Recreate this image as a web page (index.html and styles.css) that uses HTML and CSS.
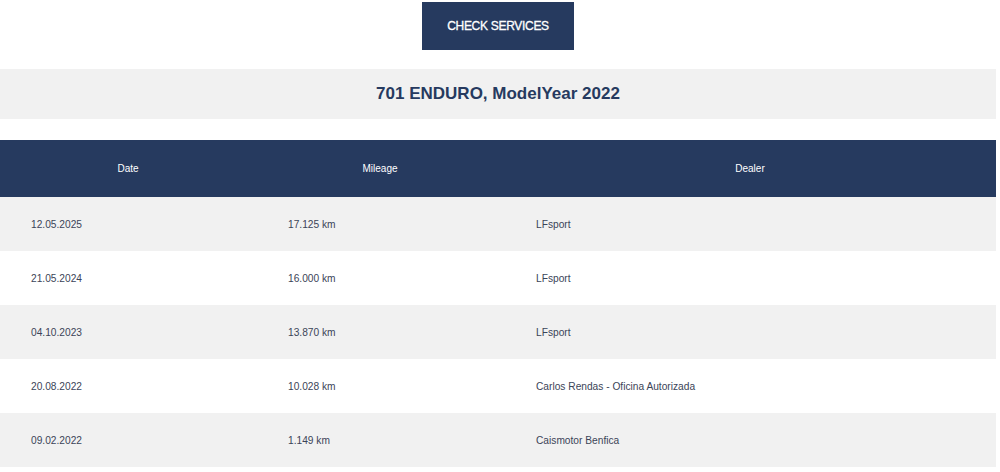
FILE: index.html
```html
<!DOCTYPE html>
<html>
<head>
<meta charset="utf-8">
<link rel="stylesheet" href="styles.css">
</head>
<body>
<div class="page">
  <div class="btn-wrap"><button class="btn">CHECK SERVICES</button></div>
  <div class="title-band"><h1 class="title">701 ENDURO, ModelYear 2022</h1></div>
  <table class="services">
    <thead>
      <tr><th class="c-date">Date</th><th class="c-mil">Mileage</th><th class="c-dealer">Dealer</th></tr>
    </thead>
    <tbody>
      <tr><td>12.05.2025</td><td>17.125 km</td><td>LFsport</td></tr>
      <tr><td>21.05.2024</td><td>16.000 km</td><td>LFsport</td></tr>
      <tr><td>04.10.2023</td><td>13.870 km</td><td>LFsport</td></tr>
      <tr><td>20.08.2022</td><td>10.028 km</td><td>Carlos Rendas - Oficina Autorizada</td></tr>
      <tr><td>09.02.2022</td><td>1.149 km</td><td>Caismotor Benfica</td></tr>
    </tbody>
  </table>
</div>
</body>
</html>
```

FILE: styles.css
```css
html, body { margin: 0; padding: 0; background: #fff; }
body { font-family: "Liberation Sans", Arial, sans-serif; }
.page { width: 996px; }
.btn-wrap { display: flex; justify-content: center; padding-top: 2px; }
.btn {
  width: 152px; height: 48px; border: 0; margin: 0; padding: 0;
  background: #263a5f; color: #fff;
  font-family: "Liberation Sans", Arial, sans-serif;
  font-size: 12px; font-weight: normal; letter-spacing: -0.3px;
  -webkit-text-stroke: 0.3px #fff;
}
.title-band {
  margin-top: 19px; height: 50px; background: #f1f1f1;
  display: flex; align-items: center; justify-content: center;
}
.title { margin: 0; font-size: 17px; font-weight: bold; color: #263a5f; }
.services { margin-top: 21px; width: 996px; border-collapse: collapse; table-layout: fixed; }
.services th {
  background: #263a5f; color: #fff; font-weight: normal; font-size: 10px;
  height: 57px; padding: 0; text-align: center;
}
.c-date { width: 256px; }
.c-mil { width: 248px; }
.services td {
  height: 54px; padding: 0 0 0 32px; font-size: 10.2px; color: #3b4458;
}
.services td:first-child { padding-left: 31px; }
.services tbody tr:nth-child(odd) { background: #f1f1f1; }
```
